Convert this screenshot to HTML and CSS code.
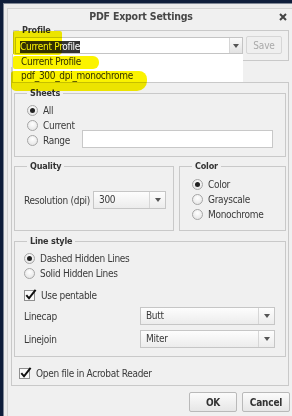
FILE: index.html
```html
<!DOCTYPE html>
<html lang="en">
<head>
  <meta charset="UTF-8">
  <meta name="viewport" content="width=device-width, initial-scale=1.0">
  <title>PDF Export Settings</title>
  <link rel="stylesheet" href="styles.css">
</head>
<body>
  <div class="window">
    <div class="dialog">
      <div class="titlebar">
        <span class="title">PDF Export Settings</span>
        <span class="close">
          <svg width="8" height="8" viewBox="0 0 8 8"><path d="M1 1L7 7M7 1L1 7" stroke="#444" stroke-width="2"/></svg>
        </span>
      </div>

      <fieldset class="group profile">
        <legend>Profile</legend>
        <div class="profile-row">
          <div class="combo">
            <div class="combo-field"><span class="selected">Current Profile</span></div>
            <div class="arrow"></div>
          </div>
          <button class="btn save" disabled>Save</button>
        </div>
      </fieldset>

      <div class="tab"></div>
      <div class="pane">
        <fieldset class="group sheets">
          <legend>Sheets</legend>
          <label class="option"><span class="radio on"></span>All</label>
          <label class="option"><span class="radio"></span>Current</label>
          <div class="option range-row">
            <label class="option range-label"><span class="radio"></span>Range</label>
            <input type="text" class="field">
          </div>
        </fieldset>

        <div class="split">
          <fieldset class="group quality">
            <legend>Quality</legend>
            <div class="field-row">
              <span class="res-label">Resolution (dpi)</span>
              <div class="select res-select"><span class="value">300</span><span class="arrow"></span></div>
            </div>
          </fieldset>
          <fieldset class="group color">
            <legend>Color</legend>
            <label class="option"><span class="radio on"></span>Color</label>
            <label class="option"><span class="radio"></span>Grayscale</label>
            <label class="option"><span class="radio"></span>Monochrome</label>
          </fieldset>
        </div>

        <fieldset class="group line-style">
          <legend>Line style</legend>
          <label class="option"><span class="radio on"></span>Dashed Hidden Lines</label>
          <label class="option"><span class="radio"></span>Solid Hidden Lines</label>
          <label class="check pentable">
            <svg width="13" height="13" viewBox="0 0 13 13"><rect x="0.5" y="1.5" width="10" height="10" fill="#fafafa" stroke="#8f8f8f"/><path d="M2.3 6.2L5 9.3L11.6 0.8" fill="none" stroke="#111" stroke-width="2"/></svg>
            Use pentable
          </label>
          <div class="field-row line-row">
            <span class="line-label">Linecap</span>
            <div class="select line-select"><span class="value">Butt</span><span class="arrow"></span></div>
          </div>
          <div class="field-row line-row">
            <span class="line-label">Linejoin</span>
            <div class="select line-select"><span class="value">Miter</span><span class="arrow"></span></div>
          </div>
        </fieldset>

        <label class="check open-file">
          <svg width="13" height="13" viewBox="0 0 13 13"><rect x="0.5" y="1.5" width="10" height="10" fill="#fafafa" stroke="#8f8f8f"/><path d="M2.3 6.2L5 9.3L11.6 0.8" fill="none" stroke="#111" stroke-width="2"/></svg>
          Open file in Acrobat Reader
        </label>
      </div>

      <div class="actions">
        <button class="btn">OK</button>
        <button class="btn">Cancel</button>
      </div>
    </div>
  </div>

  <!-- open profile list -->
  <div class="dropdown">
    <div class="item">Current Profile</div>
    <div class="item">pdf_300_dpi_monochrome</div>
  </div>

  <!-- highlighter strokes -->
  <div class="mark mark-a"></div>
  <div class="mark mark-b"></div>
  <div class="mark mark-c"></div>
</body>
</html>
```
FILE: styles.css
```css
* { box-sizing: border-box; }
body {
  margin: 0;
  position: relative;
  height: 416px;
  overflow: hidden;
  background: #0e1d3a;
  font-family: "DejaVu Sans Condensed", "Liberation Sans", sans-serif;
  font-size: 10px;
  letter-spacing: -0.3px;
  line-height: 15px;
  color: #3a3a3a;
  white-space: nowrap;
}
.window {
  margin: 3px 0 0 3px;
  height: 413px;
  padding: 4px 0 0 3px;
  background: #ebebeb;
  border-left: 1px solid #7e8694;
  border-top: 1px solid #7e8694;
}
.dialog {
  height: 100%;
  display: flex;
  flex-direction: column;
  background: #f0f0f0;
  border-left: 1px solid #d3d3d3;
  border-top: 1px solid #d3d3d3;
  overflow: hidden;
}
.titlebar { display: flex; height: 15px; line-height: 15px; }
.title {
  flex: 1;
  text-align: center;
  font-size: 10.5px;
  font-weight: bold;
  letter-spacing: -0.2px;
  color: #474747;
}
.close { width: 18px; display: flex; align-items: center; justify-content: center; }

/* group boxes */
.group {
  margin: 0;
  padding: 0;
  min-width: 0;
  border: 1px solid #c9c9c9;
}
.group legend {
  padding: 0 3px;
  font-size: 9px;
  font-weight: bold;
  letter-spacing: -0.2px;
  line-height: 12px;
  color: #333;
}
.profile { margin: 0 3px 0 5px; padding: 1px 1px 6px; }
.profile legend { margin-left: 4px; }
.profile-row { display: flex; }
.combo {
  display: flex;
  width: 228px;
  height: 17px;
  border: 1px solid #c4c4c4;
  background: #fff;
}
.combo-field { flex: 1; padding: 1px 4px; }
.selected {
  display: inline-block;
  line-height: 12px;
  background: #333;
  color: #fff;
}
.arrow {
  display: flex;
  align-items: center;
  justify-content: center;
  width: 13px;
  border-left: 1px solid #d6d6d6;
  background: linear-gradient(#fafafa, #e3e3e3);
}
.arrow::after {
  content: "";
  border-left: 3.5px solid transparent;
  border-right: 3.5px solid transparent;
  border-top: 4px solid #555;
}

.btn {
  width: 48px;
  height: 20px;
  padding: 0;
  border: 1px solid #b9b9b9;
  border-radius: 2px;
  background: linear-gradient(#fbfbfb, #e6e6e6);
  font-family: inherit;
  font-size: 10px;
  font-weight: bold;
  letter-spacing: -0.2px;
  color: #333;
}
.btn.save {
  width: 36px;
  height: 18px;
  margin: -1px 0 0 3px;
  border-color: #d6d6d6;
  background: #efefef;
  font-weight: normal;
  color: #a9a9a9;
}

.tab {
  width: 49px;
  height: 15px;
  margin: 6px 0 0 3px;
  border: 1px solid #c9c9c9;
  border-bottom: 0;
}
.pane {
  margin: 0 3px;
  padding-bottom: 5px;
  border: 1px solid #c9c9c9;
}

/* radios */
.option { display: flex; align-items: center; gap: 5px; height: 15px; }
.radio {
  display: flex;
  align-items: center;
  justify-content: center;
  width: 11px;
  height: 11px;
  border: 1px solid #a6a6a6;
  border-radius: 50%;
  background: radial-gradient(circle at 50% 35%, #fff, #e0e0e0);
}
.radio.on::after {
  content: "";
  width: 5px;
  height: 5px;
  border-radius: 50%;
  background: #222;
}

.sheets { margin: 4px 2px 0; padding: 4px 11px 8px 12px; }
.range-row { gap: 0; }
.range-label { width: 55px; flex: none; }
.field {
  width: 191px;
  height: 18px;
  margin: -4px 0 -1px;
  border: 1px solid #c8c8c8;
  background: #fff;
}

.split { display: flex; gap: 5px; margin: 3px 2px 0; }
.quality { width: 160px; padding: 19px 0 0 9px; }
.quality legend, .line-style legend { margin-left: 3px; }
.color { flex: 1; padding: 5px 0 8px 12px; }

.field-row { display: flex; align-items: center; }
.res-label { width: 69px; }
.select {
  display: flex;
  height: 18px;
  border: 1px solid #c6c6c6;
  background: linear-gradient(#fdfdfd, #ececec);
}
.select .value { flex: 1; padding-left: 5px; line-height: 16px; }
.select .arrow { width: 16px; background: none; }
.res-select { width: 73px; }

.line-style { margin: 4px 2px 0; padding: 4px 8px 8px 9px; }
.check { display: flex; align-items: center; gap: 4px; height: 14px; }
.pentable { margin-top: 7px; }
.line-row { margin-top: 5px; }
.line-label { width: 116px; }
.line-select { width: 135px; }
.open-file { margin: 9px 0 0 7px; }

.actions {
  display: flex;
  justify-content: flex-end;
  gap: 5px;
  margin-top: 6px;
  padding-right: 2px;
}

/* profile list, open over the dialog */
.dropdown {
  position: absolute;
  left: 12px;
  top: 54px;
  width: 231px;
  height: 28px;
  padding: 1px 0 0 8px;
  background: #fff;
  border-left: 1px solid #cfcfcf;
  color: #333;
}
.dropdown .item { line-height: 14px; }

.mark {
  position: absolute;
  background: #fbf300;
  mix-blend-mode: multiply;
}
.mark-a { left: 13px; top: 31px; width: 49px; height: 24px; border-radius: 2px 2px 4px 2px; }
.mark-b { left: 13px; top: 56px; width: 86px; height: 13px; border-radius: 2px 6px 6px 2px; }
.mark-c { left: 11px; top: 71px; width: 136px; height: 20px; border-radius: 3px 8px 10px 5px; }
```
